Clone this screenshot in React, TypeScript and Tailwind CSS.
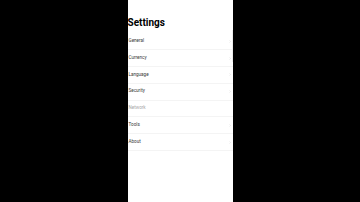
import React from 'react';

const items = [
  { label: 'General' },
  { label: 'Currency' },
  { label: 'Language' },
  { label: 'Security' },
  { label: 'Network', disabled: true },
  { label: 'Tools' },
  { label: 'About' },
];

const Chevron = ({ className = '' }: { className?: string }) => (
  <svg viewBox="0 0 4 6" className={className} fill="none" stroke="currentColor" strokeWidth={1}>
    <path d="M1 1l2 2-2 2" />
  </svg>
);

export default function App() {
  return (
    <div className="w-[360px] h-[202px] bg-black flex justify-center overflow-hidden" style={{ fontFamily: 'Roboto, "Liberation Sans", sans-serif' }}>
      <div className="relative w-[105px] h-[202px] bg-white">
        <h1 className="pt-[16px] h-[29px] text-[10px] leading-[13px] font-bold text-black">Settings</h1>
        <ul className="mt-[4.5px]">
          {items.map(item => (
            <li
              key={item.label}
              className="h-[16.8px] flex items-center justify-between pl-[1px] pr-[2px] border-b border-[#f4f4f4]"
            >
              <span className={`text-[4.6px] ${item.disabled ? 'text-[#a8a8a8]' : 'text-[#3a3a3a]'}`}>{item.label}</span>
              {!item.disabled && <Chevron className="w-[2px] h-[3px] text-[#d6d6d6]" />}
            </li>
          ))}
        </ul>
        <div className="absolute right-0 top-[30px] w-[1px] h-[32px] bg-[#ececec]" />
      </div>
    </div>
  );
}
